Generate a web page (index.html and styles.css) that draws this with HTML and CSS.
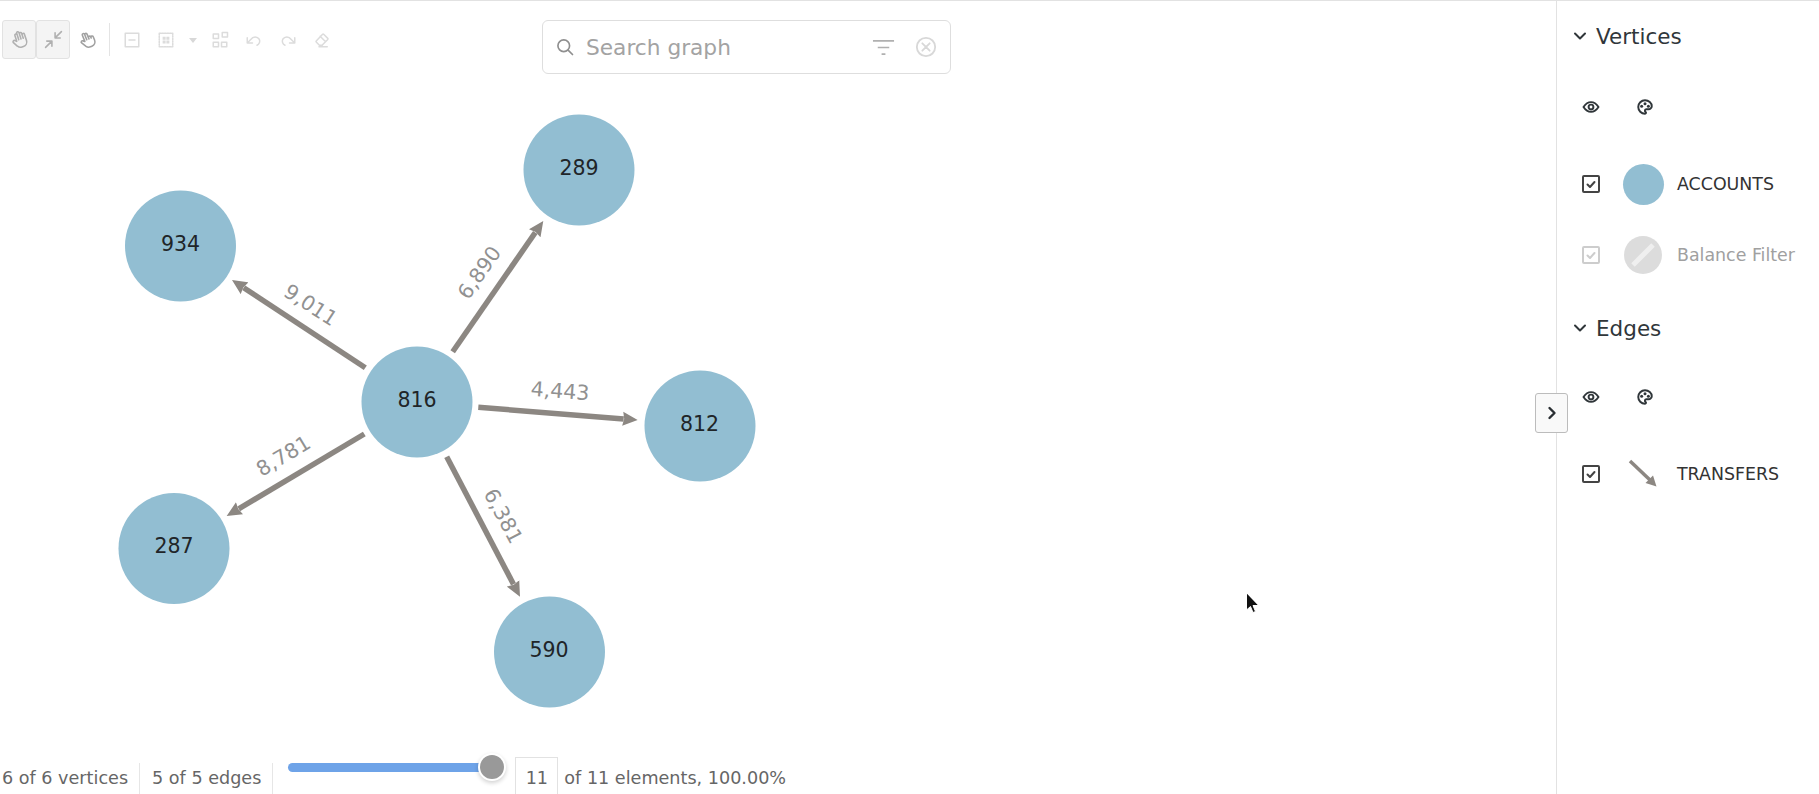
FILE: index.html
```html
<!DOCTYPE html>
<html lang="en">
<head>
    <meta charset="UTF-8">
    <meta name="viewport" content="width=device-width, initial-scale=1.0">
    <title>Graph</title>
    <link rel="stylesheet" href="styles.css">
</head>
<body>
    <div class="app">
        <main class="graph">
            <!-- Canvas -->
            <svg class="graph-canvas" width="1556" height="793" viewBox="0 1 1556 793">
                <defs>
                    <marker id="head" markerUnits="userSpaceOnUse" markerWidth="15" markerHeight="15" viewBox="0 0 15 15" refX="1" refY="7.500" orient="auto">
                        <path d="M0 0.500L15 7.500L0 14.500L1.500 7.500z" fill="#8c8782"/>
                    </marker>
                </defs>
                <line class="edge" x1="365.3" y1="367.7" x2="243.7" y2="287.7" marker-end="url(#head)"/>
                <line class="edge" x1="452.7" y1="351.7" x2="535.3" y2="232.5" marker-end="url(#head)"/>
                <line class="edge" x1="478.3" y1="407.3" x2="623.7" y2="418.9" marker-end="url(#head)"/>
                <line class="edge" x1="364.3" y1="434" x2="238.7" y2="508.8" marker-end="url(#head)"/>
                <line class="edge" x1="446.7" y1="456.7" x2="513.5" y2="584.3" marker-end="url(#head)"/>

                <text class="edge-label" transform="translate(310.7 305) rotate(33)">9,011</text>
                <text class="edge-label" transform="translate(479.3 272.7) rotate(-55)">6,890</text>
                <text class="edge-label" transform="translate(560 391) rotate(4.5)">4,443</text>
                <text class="edge-label" transform="translate(283.3 456) rotate(-31)">8,781</text>
                <text class="edge-label" transform="translate(503.3 516) rotate(62)">6,381</text>

                <circle class="node" cx="417" cy="402" r="55.500"/>
                <circle class="node" cx="579" cy="170" r="55.500"/>
                <circle class="node" cx="180.500" cy="246" r="55.500"/>
                <circle class="node" cx="700" cy="426" r="55.500"/>
                <circle class="node" cx="174" cy="548.500" r="55.500"/>
                <circle class="node" cx="549.500" cy="652" r="55.500"/>

                <text class="node-label" x="417" y="400">816</text>
                <text class="node-label" x="579" y="168">289</text>
                <text class="node-label" x="180.500" y="244">934</text>
                <text class="node-label" x="699.500" y="424">812</text>
                <text class="node-label" x="174" y="546">287</text>
                <text class="node-label" x="549" y="650">590</text>
            </svg>

            <!-- Barra superior -->
            <div class="graph-top">
                <div class="toolbar">
                    <button class="tool tool-boxed">
                        <svg viewBox="0 0 24 24"><g transform="rotate(-18 12 12)"><path d="M8 13v-7.5a1.5 1.5 0 0 1 3 0v6.5M11 5.5v-2a1.5 1.5 0 1 1 3 0v8.5M14 5.5a1.5 1.5 0 0 1 3 0v6.5M17 7.5a1.5 1.5 0 0 1 3 0v8.5a6 6 0 0 1 -6 6h-2a6 6 0 0 1 -5 -2.7l-.2 -.3c-.3 -.5 -1.4 -2.4 -3.3 -5.7a1.5 1.5 0 0 1 .5 -2a1.9 1.9 0 0 1 2.3 .3l1.5 1.5"/></g></svg>
                    </button>
                    <button class="tool tool-boxed">
                        <svg viewBox="0 0 24 24"><path d="M2 22l8 -8M3.500 14h6.500v6.500M22 2l-8 8M14 3.500v6.500h6.500"/></svg>
                    </button>
                    <button class="tool tool-plain tool-hand">
                        <svg viewBox="0 0 24 24"><g transform="rotate(-22 12 12)"><path d="M8 13v-8.500a1.500 1.500 0 0 1 3 0v7.500M11 11.500v-6a1.500 1.500 0 0 1 3 0v6.500M14 10.500a1.500 1.500 0 0 1 3 0v1.500M17 11.500a1.500 1.500 0 0 1 3 0v4.500a6 6 0 0 1 -6 6h-2a6 6 0 0 1 -5 -2.700l-.2 -.3c-.3 -.5 -1.400 -2.400 -3.300 -5.700a1.500 1.500 0 0 1 .5 -2a1.900 1.900 0 0 1 2.300 .3l1.500 1.500"/></g></svg>
                    </button>
                    <span class="tool-sep"></span>
                    <button class="tool tool-faded">
                        <svg viewBox="0 0 24 24"><rect x="3" y="3" width="18" height="18"/><path d="M8 12h8"/></svg>
                    </button>
                    <button class="tool tool-faded">
                        <svg viewBox="0 0 24 24"><rect x="3" y="3" width="18" height="18" stroke-dasharray="2 1.500"/><path class="fill-icon" d="M7.500 7.500h4v4h-4zM12.500 7.500h4v4h-4zM7.500 12.500h4v4h-4zM12.500 12.500h4v4h-4z"/></svg>
                    </button>
                    <span class="caret"></span>
                    <button class="tool tool-faded">
                        <svg viewBox="0 0 24 24"><rect x="3" y="4" width="7" height="6"/><rect x="15" y="2" width="7" height="6"/><rect x="3" y="15" width="7" height="6"/><rect x="14" y="15" width="7" height="6"/></svg>
                    </button>
                    <button class="tool tool-faded">
                        <svg viewBox="0 0 24 24"><path d="M3 9v7h7M3 16l5 -5a6.500 6.500 0 0 1 11 0a6 6 0 0 1 -3 8"/></svg>
                    </button>
                    <button class="tool tool-faded">
                        <svg viewBox="0 0 24 24"><g transform="matrix(-1 0 0 1 24 0)"><path d="M3 9v7h7M3 16l5 -5a6.500 6.500 0 0 1 11 0a6 6 0 0 1 -3 8"/></g></svg>
                    </button>
                    <button class="tool tool-faded">
                        <svg viewBox="0 0 24 24"><path d="M19 21h-11M12.500 19h-4l-4.200 -4.300a1 1 0 0 1 0 -1.400l8.500 -9a1 1 0 0 1 1.400 0l5.500 5.500a1 1 0 0 1 0 1.400l-7.700 7.800M16.500 14l-7 -7"/></svg>
                    </button>
                </div>

                <div class="search">
                    <svg class="search-icon" viewBox="0 0 24 24"><circle cx="10.500" cy="10.500" r="7"/><path d="M16 16l5 5"/></svg>
                    <span class="search-text">Search graph</span>
                    <svg class="search-filter" viewBox="0 0 24 24"><path d="M1 5h22M6 12h12M10 19h4"/></svg>
                    <svg class="search-clear" viewBox="0 0 24 24"><circle cx="12" cy="12" r="10"/><path d="M8 8l8 8M16 8l-8 8"/></svg>
                </div>
            </div>

            <!-- Barra de estado -->
            <div class="status">
                <span class="status-item status-first">6 of 6 vertices</span>
                <span class="status-item">5 of 5 edges</span>
                <div class="slider">
                    <div class="slider-track"></div>
                    <div class="slider-thumb"></div>
                </div>
                <span class="status-count">11</span>
                <span class="status-text">of 11 elements, 100.00%</span>
            </div>

            <button class="collapse">
                <svg viewBox="0 0 12 16"><path d="M3.500 3l5 5l-5 5"/></svg>
            </button>

            <svg class="cursor" viewBox="0 0 14 22"><path d="M1.500 1v17l4 -3.500l2.500 6l2.500 -1l-2.500 -6h5.500z"/></svg>
        </main>

        <!-- Panel lateral -->
        <aside class="sidebar">
            <section class="section">
                <h2 class="section-head">
                    <svg viewBox="0 0 16 16"><path d="M3 5.500l5 5l5 -5"/></svg>
                    Vertices
                </h2>
                <div class="section-tools">
                    <svg viewBox="0 0 24 24"><path d="M2 12c3 -4.500 6 -6.500 10 -6.500s7 2 10 6.500c-3 4.500 -6 6.500 -10 6.500s-7 -2 -10 -6.500z"/><circle cx="12" cy="12" r="3.200"/></svg>
                    <svg viewBox="0 0 24 24"><path d="M12 21a9 9 0 0 1 0 -18c5 0 9 3.600 9 8c0 1.100 -.5 2.100 -1.300 2.800c-.8 .8 -2 1.200 -3.200 1.200h-2.500a2 2 0 0 0 -1 3.800a1.300 1.300 0 0 1 -1 2.200"/><circle class="fill-icon" cx="7.500" cy="11" r="2"/><circle class="fill-icon" cx="12" cy="7.500" r="2"/><circle class="fill-icon" cx="16.500" cy="11" r="2"/></svg>
                </div>
                <div class="legend-row legend-first">
                    <svg class="check" viewBox="0 0 18 18"><rect x="1" y="1" width="16" height="16" rx="1"/><path d="M5.500 9.500l2.500 2.500l4.500 -5"/></svg>
                    <span class="legend-swatch"><span class="dot"></span></span>
                    <span class="legend-name">ACCOUNTS</span>
                </div>
                <div class="legend-row legend-off">
                    <svg class="check" viewBox="0 0 18 18"><rect x="1" y="1" width="16" height="16" rx="1"/><path d="M5.500 9.500l2.500 2.500l4.500 -5"/></svg>
                    <span class="legend-swatch"><span class="dot dot-off"><svg viewBox="0 0 38 38"><path d="M9 29L29 9"/></svg></span></span>
                    <span class="legend-name">Balance Filter</span>
                </div>
            </section>

            <section class="section section-edges">
                <h2 class="section-head">
                    <svg viewBox="0 0 16 16"><path d="M3 5.500l5 5l5 -5"/></svg>
                    Edges
                </h2>
                <div class="section-tools">
                    <svg viewBox="0 0 24 24"><path d="M2 12c3 -4.500 6 -6.500 10 -6.500s7 2 10 6.500c-3 4.500 -6 6.500 -10 6.500s-7 -2 -10 -6.500z"/><circle cx="12" cy="12" r="3.200"/></svg>
                    <svg viewBox="0 0 24 24"><path d="M12 21a9 9 0 0 1 0 -18c5 0 9 3.600 9 8c0 1.100 -.5 2.100 -1.300 2.800c-.8 .8 -2 1.200 -3.200 1.200h-2.500a2 2 0 0 0 -1 3.800a1.300 1.300 0 0 1 -1 2.200"/><circle class="fill-icon" cx="7.500" cy="11" r="2"/><circle class="fill-icon" cx="12" cy="7.500" r="2"/><circle class="fill-icon" cx="16.500" cy="11" r="2"/></svg>
                </div>
                <div class="legend-row legend-first">
                    <svg class="check" viewBox="0 0 18 18"><rect x="1" y="1" width="16" height="16" rx="1"/><path d="M5.500 9.500l2.500 2.500l4.500 -5"/></svg>
                    <span class="legend-swatch">
                        <svg class="edge-sample" viewBox="0 0 44 44"><path class="edge-sample-line" d="M9 9L29 28"/><path class="edge-sample-head" d="M35.500 34.500L24.500 31L32 23.500z"/></svg>
                    </span>
                    <span class="legend-name">TRANSFERS</span>
                </div>
            </section>
        </aside>
    </div>
</body>
</html>
```

FILE: styles.css
```css
/* General */
body {
    font-family: "DejaVu Sans", sans-serif;
    background: #fff;
    color: #333;
    margin: 0;
    padding: 0;
    overflow: hidden;
}

svg {
    display: block;
    fill: none;
    stroke-linecap: round;
    stroke-linejoin: round;
}

button {
    margin: 0;
    padding: 0;
    font: inherit;
    background: none;
    border: none;
}

.fill-icon {
    fill: currentColor;
    stroke: none;
}

.app {
    display: flex;
    height: 794px;
    box-sizing: border-box;
    border-top: 1px solid #e2e2e2;
}

.graph {
    flex: 1;
    position: relative;
    display: flex;
    flex-direction: column;
    justify-content: space-between;
    min-width: 0;
}

/* Canvas */
.graph-canvas {
    position: absolute;
    left: 0;
    top: 0;
}

.edge {
    stroke: #8c8782;
    stroke-width: 5.500;
    stroke-linecap: butt;
}

.node {
    fill: #92bed2;
}

.node-label,
.edge-label {
    text-anchor: middle;
    dominant-baseline: central;
    font-size: 20.500px;
}

.node-label {
    fill: #1f2528;
}

.edge-label {
    fill: #919191;
}

/* Barra superior */
.graph-top {
    position: relative;
    display: grid;
    grid-template-columns: 542px 409px;
    padding-top: 19px;
}

.toolbar {
    display: flex;
    align-items: flex-start;
    padding-left: 2px;
}

.tool {
    display: flex;
    align-items: center;
    justify-content: center;
    color: #dcdcdc;
}

.tool svg {
    width: 18px;
    height: 18px;
    stroke: currentColor;
    stroke-width: 2;
}

.tool-boxed {
    width: 34px;
    height: 39px;
    box-sizing: border-box;
    background: #f4f4f4;
    border: 1px solid #e2e2e2;
    border-radius: 3px;
    color: #b0b0b0;
}

.tool-boxed svg {
    width: 19px;
    height: 19px;
}

.tool-plain,
.tool-faded {
    height: 39px;
    width: 34px;
}

.tool-hand {
    color: #a0a0a0;
}

.tool-hand svg {
    width: 19px;
    height: 19px;
}

.tool-sep {
    width: 1px;
    height: 33px;
    margin: 3px 5px 0 5px;
    background: #e4e4e4;
}

.caret {
    width: 0;
    height: 0;
    margin: 18px 6px 0 6px;
    border-left: 4px solid transparent;
    border-right: 4px solid transparent;
    border-top: 5px solid #d8d8d8;
}

.search {
    display: flex;
    align-items: center;
    height: 54px;
    box-sizing: border-box;
    padding: 0 13px 0 12px;
    background: #fff;
    border: 1px solid #dedede;
    border-radius: 6px;
}

.search-icon {
    width: 20px;
    height: 20px;
    stroke: #8f8f8f;
    stroke-width: 2;
}

.search-text {
    flex: 1;
    margin-left: 11px;
    font-size: 21.700px;
    color: #a3a3a3;
}

.search-filter {
    width: 23px;
    height: 23px;
    margin-right: -1px;
    stroke: #b0b0b0;
    stroke-width: 1.800;
    stroke-linecap: butt;
}

.search-clear {
    width: 22px;
    height: 22px;
    margin-left: 21px;
    stroke: #d8d8d8;
    stroke-width: 2;
}

/* Barra de estado */
.status {
    position: relative;
    display: flex;
    align-items: flex-end;
    height: 37px;
    font-size: 17.600px;
    color: #666;
}

.status-item {
    height: 31px;
    line-height: 30px;
    padding: 0 11px 0 12px;
    border-right: 1px solid #e6e6e6;
    white-space: nowrap;
}

.status-first {
    padding-left: 2px;
}

.slider {
    position: relative;
    align-self: flex-start;
    width: 204px;
    height: 37px;
    margin: 0 23px 0 15px;
}

.slider-track {
    margin-top: 6px;
    height: 9px;
    background: #6ea3e8;
    border-radius: 5px 0 0 5px;
}

.slider-thumb {
    position: absolute;
    right: -12px;
    top: -2px;
    width: 24px;
    height: 24px;
    box-sizing: border-box;
    background: #999;
    border-radius: 50%;
    box-shadow: 0 0 0 2px #fff, 0 2px 4px 2px rgba(0, 0, 0, 0.18);
}

.status-count {
    width: 43px;
    height: 37px;
    line-height: 41px;
    box-sizing: border-box;
    text-align: center;
    border: 1px solid #e2e2e2;
    border-bottom: none;
}

.status-text {
    height: 31px;
    line-height: 30px;
    margin-left: 6px;
    white-space: nowrap;
}

/* Boton de panel */
.collapse {
    position: absolute;
    right: -12px;
    top: 392px;
    width: 33px;
    height: 40px;
    box-sizing: border-box;
    display: flex;
    align-items: center;
    justify-content: center;
    background: #f9f9f9;
    border: 1px solid #bcbcbc;
    border-radius: 3px;
    z-index: 2;
}

.collapse svg {
    width: 12px;
    height: 16px;
    stroke: #2a2f33;
    stroke-width: 2.400;
}

.cursor {
    position: absolute;
    left: 1245px;
    top: 591px;
    width: 14px;
    height: 22px;
    fill: #111;
    stroke: #fff;
    stroke-width: 1;
}

/* Panel lateral */
.sidebar {
    width: 263px;
    box-sizing: border-box;
    border-left: 1px solid #e2e2e2;
}

.section-head {
    display: flex;
    align-items: center;
    gap: 8px;
    height: 40px;
    margin: 0;
    padding-left: 15px;
    font-size: 21.500px;
    font-weight: normal;
    color: #30363a;
}

.section-head svg {
    width: 16px;
    height: 16px;
    stroke: #30363a;
    stroke-width: 2;
}

.section:first-child {
    padding-top: 15px;
}

.section-edges {
    margin-top: 31px;
}

.section-tools {
    display: flex;
    gap: 34px;
    align-items: center;
    height: 40px;
    margin-top: 31px;
    padding-left: 24px;
    color: #30363a;
}

.section-edges .section-tools {
    margin-top: 29px;
}

.section-tools svg {
    width: 18px;
    height: 18px;
    margin: 0 1px;
    stroke: #30363a;
    stroke-width: 2.600;
}

.legend-row {
    display: flex;
    align-items: center;
    height: 44px;
    margin-top: 27px;
    padding-left: 25px;
}

.legend-first {
    margin-top: 35px;
}

.check {
    width: 18px;
    height: 18px;
    stroke: #444;
    stroke-width: 2;
}

.legend-swatch {
    display: flex;
    align-items: center;
    justify-content: center;
    width: 44px;
    height: 44px;
    margin: 0 11px 0 21px;
}

.legend-name {
    margin-left: 1px;
}

.dot {
    display: block;
    width: 41px;
    height: 41px;
    background: #92bed2;
    border-radius: 50%;
}

.dot-off {
    width: 38px;
    height: 38px;
    background: #dcdcdc;
}

.dot-off svg {
    stroke: #efefef;
    stroke-width: 5;
    stroke-linecap: butt;
}

.legend-name {
    font-size: 17.400px;
    color: #333;
    white-space: nowrap;
}

.legend-off .check {
    stroke: #cdcdcd;
}

.legend-off .legend-name {
    color: #a0a0a0;
}

.edge-sample {
    width: 44px;
    height: 44px;
}

.edge-sample-line {
    stroke: #8c8782;
    stroke-width: 3.500;
    stroke-linecap: butt;
}

.edge-sample-head {
    fill: #8c8782;
}
```
